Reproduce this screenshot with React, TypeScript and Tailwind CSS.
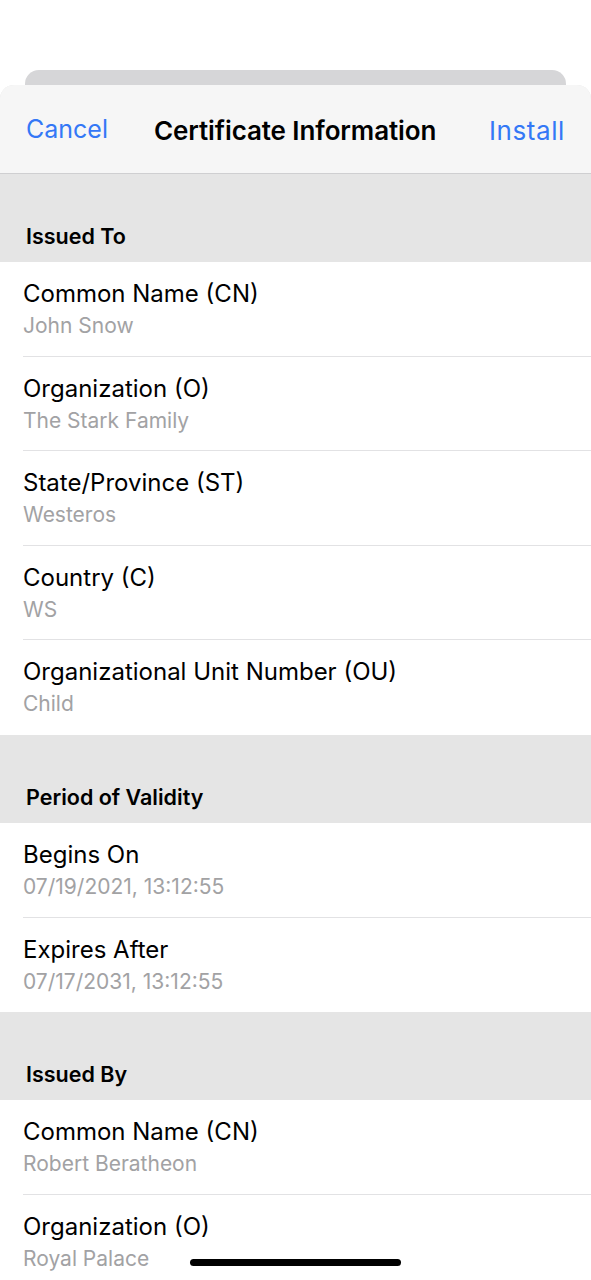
const sections = [
  {
    title: "Issued To",
    rows: [
      ["Common Name (CN)", "John Snow"],
      ["Organization (O)", "The Stark Family"],
      ["State/Province (ST)", "Westeros"],
      ["Country (C)", "WS"],
      ["Organizational Unit Number (OU)", "Child"],
    ],
  },
  {
    title: "Period of Validity",
    rows: [
      ["Begins On", "07/19/2021, 13:12:55"],
      ["Expires After", "07/17/2031, 13:12:55"],
    ],
  },
  {
    title: "Issued By",
    rows: [
      ["Common Name (CN)", "Robert Beratheon"],
      ["Organization (O)", "Royal Palace"],
    ],
  },
];

function Row({ label, value, last }: { label: string; value: string; last: boolean }) {
  return (
    <div className="h-[94.6px] bg-white pl-[23px]">
      <div className={`flex h-full flex-col pt-[17px] ${last ? "" : "border-b border-[#e2e2e4]"}`}>
        <p className="text-[24px] leading-[30px] text-black">{label}</p>
        <p className="mt-[4px] text-[21px] leading-[26px] text-[#a2a2a4]">{value}</p>
      </div>
    </div>
  );
}

export default function App() {
  return (
    <div className="relative h-[1280px] w-[591px] overflow-hidden bg-white font-['Inter',sans-serif]">
      <div className="h-[70px]" />
      <div className="mx-[25px] h-[30px] rounded-t-[14px] bg-[#d6d6d8]" />
      <div className="-mt-[15px] overflow-hidden rounded-t-[14px] bg-[#e5e5e5]">
        <header className="flex h-[89px] items-center border-b border-[#cfcfd1] bg-[#f6f6f6] px-[26px] pt-[2px]">
          <span className="w-[128px] text-[25px] text-[#3478f6]">Cancel</span>
          <span className="text-[26px] font-semibold tracking-[-0.1px] text-black">Certificate Information</span>
          <span className="ml-auto text-[26px] tracking-[0.6px] text-[#3478f6]">Install</span>
        </header>
        {sections.map((s) => (
          <section key={s.title}>
            <div className="flex h-[88px] items-end pb-[10px] pl-[26px]">
              <h2 className="text-[21.5px] font-semibold text-black">{s.title}</h2>
            </div>
            {s.rows.map(([label, value], j) => (
              <Row key={label + j} label={label} value={value} last={j === s.rows.length - 1} />
            ))}
          </section>
        ))}
      </div>
      <div className="absolute bottom-[14px] left-[190px] h-[7px] w-[211px] rounded-full bg-black" />
    </div>
  );
}
